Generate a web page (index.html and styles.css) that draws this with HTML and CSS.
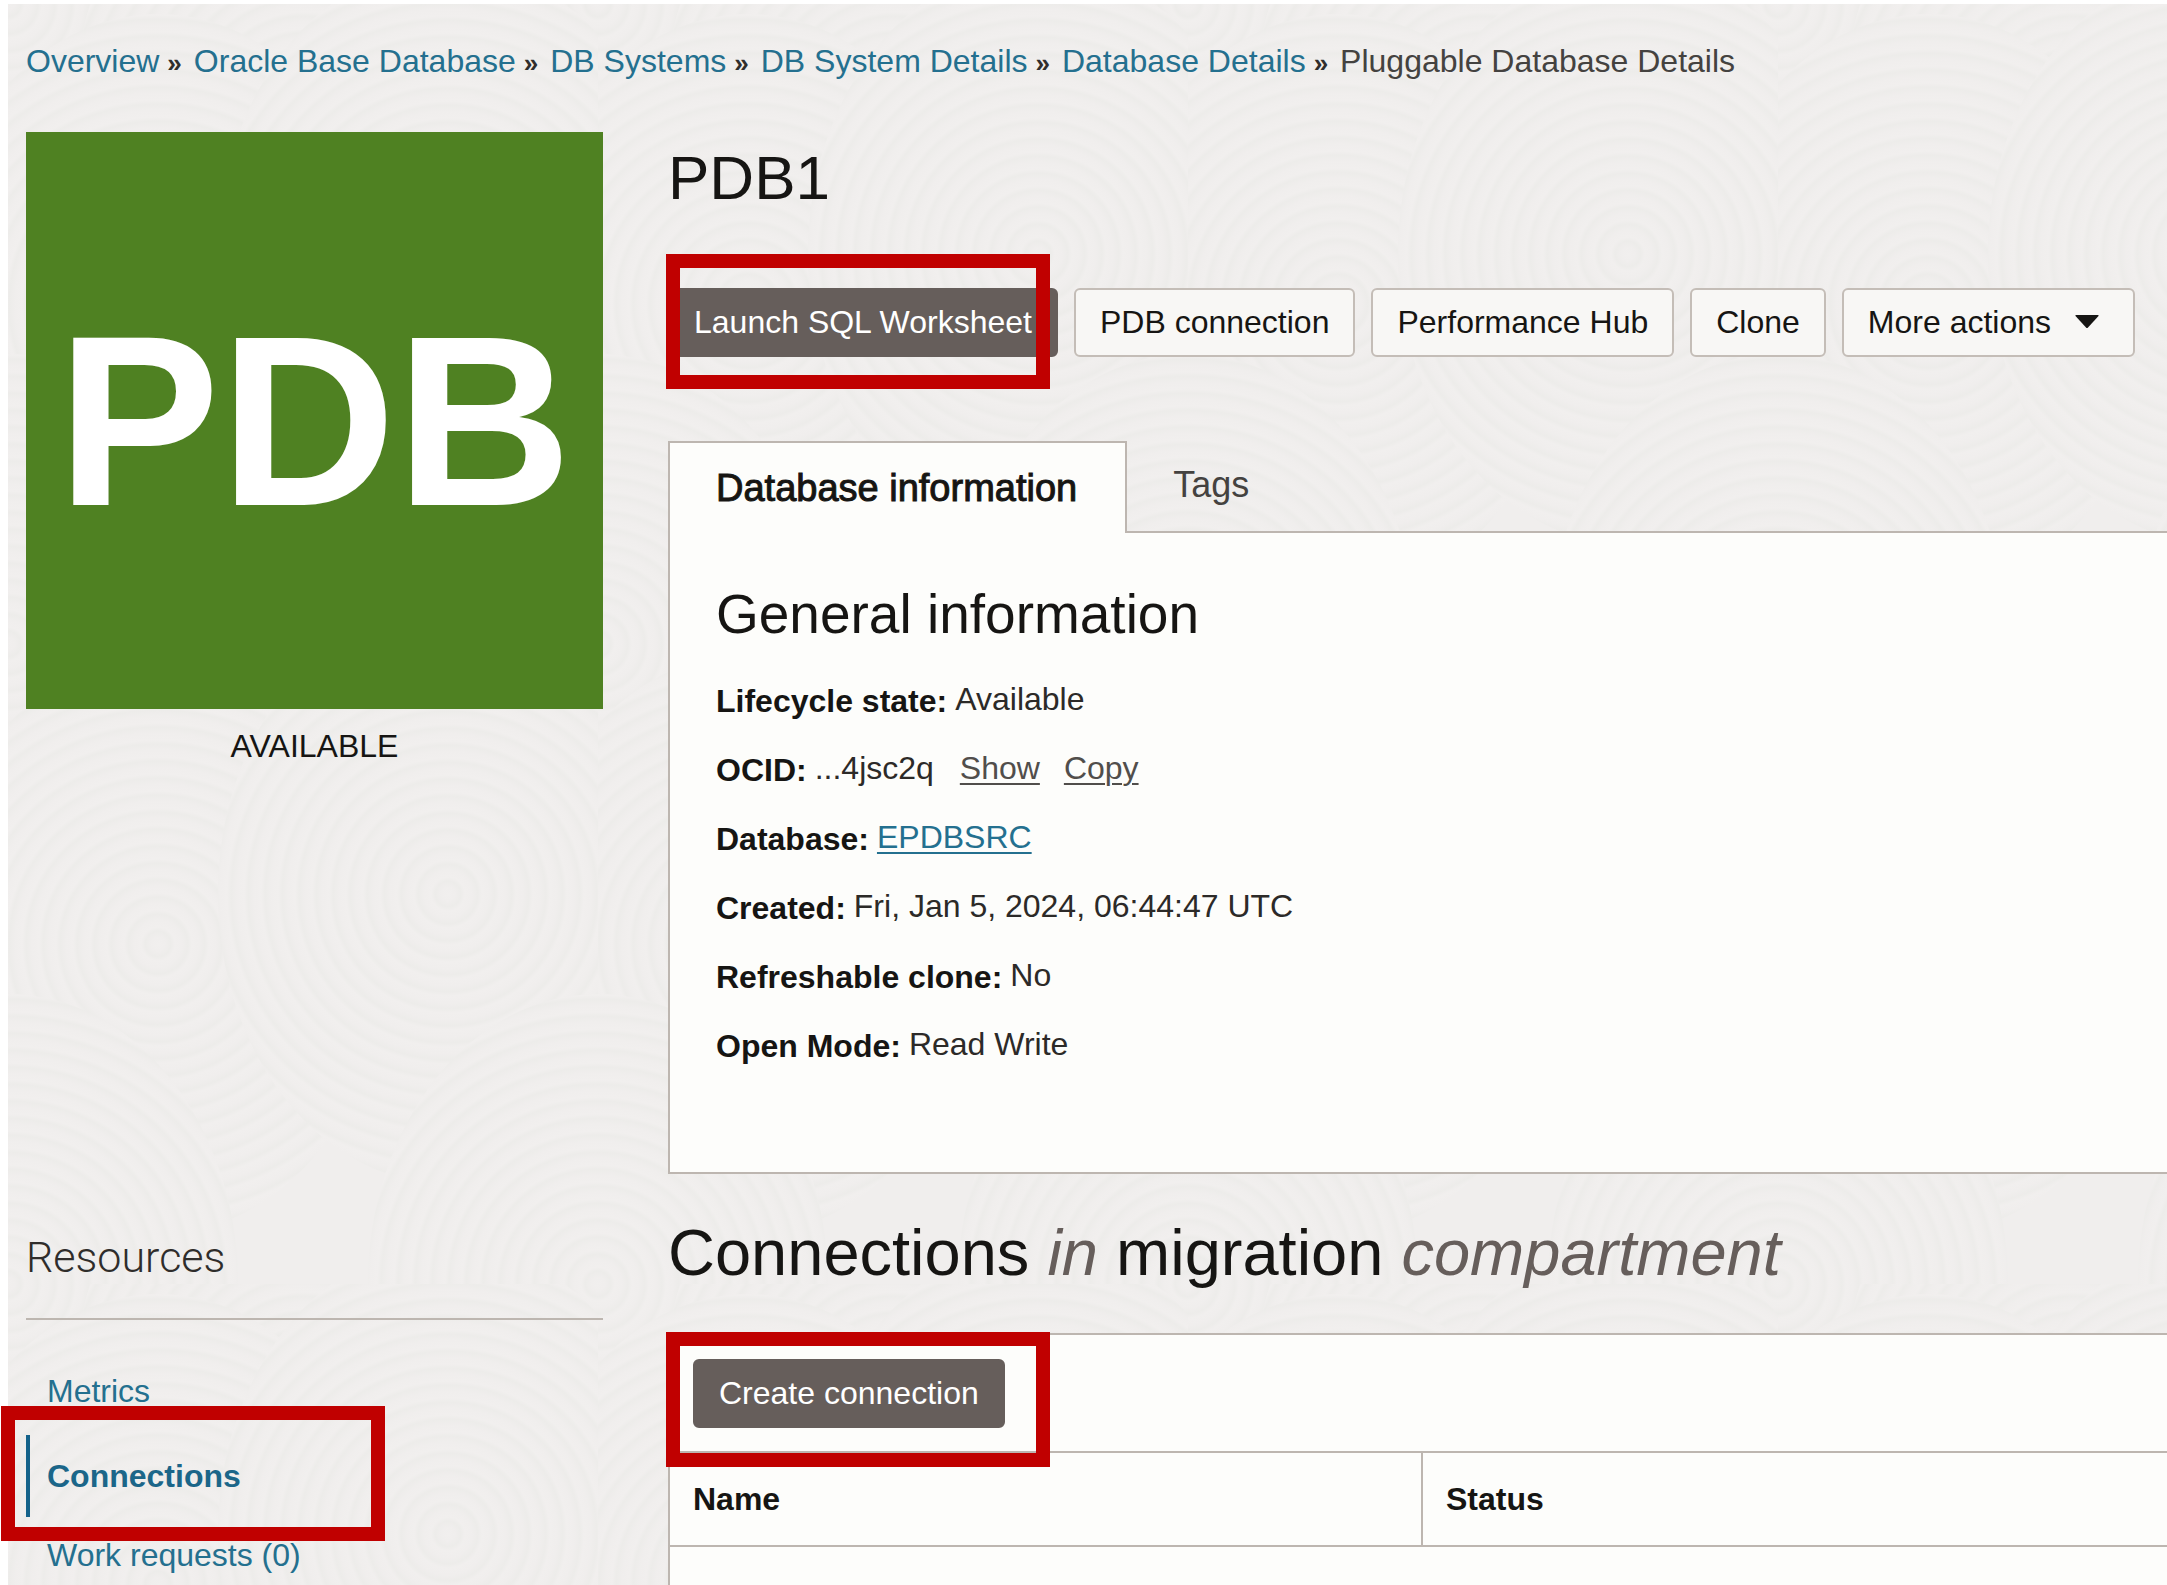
FILE: index.html
```html
<!DOCTYPE html>
<html lang="en">
<head>
<meta charset="utf-8">
<title>Pluggable Database Details</title>
<link rel="stylesheet" href="styles.css">
</head>
<body>
<div class="page">
  <svg class="texture" aria-hidden="true">
    <defs>
      <radialGradient id="rings" gradientUnits="userSpaceOnUse" cx="0" cy="0" r="17" spreadMethod="repeat">
        <stop offset="0" stop-color="#f1efee"/>
        <stop offset="0.4" stop-color="#f0eeed"/>
        <stop offset="0.75" stop-color="#edecea"/>
        <stop offset="1" stop-color="#f1efee"/>
      </radialGradient>
      <ellipse id="swirl" rx="230" ry="290" fill="url(#rings)"/>
      <pattern id="swirls" width="590" height="640" patternUnits="userSpaceOnUse">
        <use href="#swirl" x="0" y="0"/>
        <use href="#swirl" x="590" y="0"/>
        <use href="#swirl" x="295" y="110"/>
        <use href="#swirl" x="150" y="300"/>
        <use href="#swirl" x="440" y="250"/>
        <use href="#swirl" x="0" y="640"/>
        <use href="#swirl" x="590" y="640"/>
      </pattern>
    </defs>
    <rect width="100%" height="100%" fill="url(#swirls)"/>
  </svg>

  <nav aria-label="Breadcrumb">
    <ol class="breadcrumb">
      <li><a href="#">Overview</a></li>
      <li><a href="#">Oracle Base Database</a></li>
      <li><a href="#">DB Systems</a></li>
      <li><a href="#">DB System Details</a></li>
      <li><a href="#">Database Details</a></li>
      <li aria-current="page">Pluggable Database Details</li>
    </ol>
  </nav>

  <div class="columns">
    <aside>
      <div class="tile">PDB</div>
      <p class="state">AVAILABLE</p>
      <h2 class="resources-title">Resources</h2>
      <ul class="resources">
        <li><a href="#">Metrics</a></li>
        <li class="marked"><a class="current" href="#">Connections</a><span class="marker marker-nav"></span></li>
        <li><a href="#">Work requests (0)</a></li>
      </ul>
    </aside>

    <main>
      <h1>PDB1</h1>
      <div class="actions">
        <div class="marked"><button class="btn primary" type="button">Launch SQL Worksheet</button><span class="marker marker-launch"></span></div>
        <button class="btn" type="button">PDB connection</button>
        <button class="btn" type="button">Performance Hub</button>
        <button class="btn" type="button">Clone</button>
        <button class="btn menu" type="button">More actions
          <svg width="24" height="13" viewBox="0 0 24 13" aria-hidden="true"><path d="M1 0H23Q24 0 23.500 1L13 12.500Q12 13.500 11 12.500L.5 1Q0 0 1 0Z" fill="#161513"/></svg>
        </button>
      </div>

      <div class="tabs" role="tablist">
        <button class="tab active" type="button" role="tab" aria-selected="true">Database information</button>
        <button class="tab" type="button" role="tab" aria-selected="false">Tags</button>
      </div>
      <section class="panel info">
        <h2>General information</h2>
        <dl>
          <div><dt>Lifecycle state:</dt><dd>Available</dd></div>
          <div><dt>OCID:</dt><dd>...4jsc2q</dd><dd class="tools"><a href="#">Show</a><a href="#">Copy</a></dd></div>
          <div><dt>Database:</dt><dd><a class="link" href="#">EPDBSRC</a></dd></div>
          <div><dt>Created:</dt><dd>Fri, Jan 5, 2024, 06:44:47 UTC</dd></div>
          <div><dt>Refreshable clone:</dt><dd>No</dd></div>
          <div><dt>Open Mode:</dt><dd>Read Write</dd></div>
        </dl>
      </section>

      <h2 class="section-title">Connections <em>in</em> migration <em>compartment</em></h2>
      <section class="panel connections">
        <div class="toolbar">
          <div class="marked"><button class="btn primary" type="button">Create connection</button><span class="marker marker-create"></span></div>
        </div>
        <table>
          <thead><tr><th class="name" scope="col">Name</th><th scope="col">Status</th></tr></thead>
          <tbody></tbody>
        </table>
      </section>
    </main>
  </div>
</div>
</body>
</html>
```
FILE: styles.css
```css
* { box-sizing: border-box; }

html { overflow: hidden; }

body {
  margin: 0;
  background: #fff;
  color: #161513;
  font: 32px/40px "Liberation Sans", Arial, sans-serif;
}

h1, h2, p, ol, ul, dl, dd { margin: 0; padding: 0; font-weight: normal; }
ol, ul { list-style: none; }
a { color: #24708f; text-decoration: none; }

.page {
  position: relative;
  display: flex;
  flex-direction: column;
  height: calc(100vh - 4px);
  margin: 4px 0 0 8px;
  padding: 37px 0 0 18px;
  overflow: clip;
  overflow-clip-margin: 10px;
  background: #f0eeed;
}

.texture {
  position: absolute;
  inset: 0;
  width: 100%;
  height: 100%;
}

nav, .columns { position: relative; }

/* Breadcrumb */
.breadcrumb { display: flex; height: 40px; color: #444240; }
.breadcrumb li + li::before {
  content: "»";
  margin: 0 12px 0 8px;
  color: #302e2c;
  font-size: 26px;
  font-weight: bold;
}

/* Layout */
.columns {
  display: grid;
  grid-template-columns: 577px 1fr;
  gap: 65px;
  flex: 1;
  margin-top: 51px;
}
main { display: flex; flex-direction: column; min-width: 0; }

/* Sidebar */
.tile {
  display: grid;
  place-items: center;
  height: 577px;
  background: #4f8122;
  color: #fff;
  font-size: 244px;
  font-weight: bold;
  line-height: 276px;
}
.state { margin-top: 17px; text-align: center; }
.resources-title {
  margin-top: 467px;
  padding-bottom: 37px;
  border-bottom: 2px solid #bdb6b0;
  color: #2f2d2b;
  font: 300 43px/48px Roboto, "Liberation Sans", sans-serif;
}
.resources { margin-top: 33px; }
.resources a {
  display: block;
  padding: 0 0 6px 17px;
  border-left: 4px solid transparent;
  line-height: 76px;
}
.resources .current {
  padding-bottom: 0;
  border-color: #14628a;
  color: #1b6689;
  font-weight: bold;
  line-height: 82px;
}

/* Callout frames drawn over the controls */
.marked { position: relative; }
.marker {
  position: absolute;
  width: 384px;
  height: 135px;
  border: 14px solid #c00000;
  pointer-events: none;
}
.marker-nav { left: -25px; top: -29px; }
.marker-launch { left: -2px; top: -34px; }
.marker-create { left: -27px; top: -27px; }

/* Buttons */
h1, .section-title { font-size: 65px; line-height: 72px; }
h1 { margin-top: 10px; font-size: 62px; }
.actions { display: flex; gap: 16px; margin-top: 74px; }
.btn {
  display: flex;
  align-items: center;
  height: 69px;
  padding: 0 24px 2px;
  border: 2px solid #c4bdb7;
  border-radius: 6px;
  background: #f8f7f5;
  color: #161513;
  font: inherit;
  white-space: nowrap;
}
.btn.primary { border-color: #665e5b; background: #665e5b; color: #fff; }
.btn.menu { gap: 24px; padding-right: 34px; }

/* Tabs */
.tabs { display: flex; margin-top: 84px; }
.tab {
  height: 92px;
  margin: 0;
  padding: 0 46px 4px;
  border: 0;
  background: none;
  color: #444240;
  font: 36px/44px "Liberation Sans", Arial, sans-serif;
}
.tab.active {
  z-index: 1;
  padding: 0 48px 0 46px;
  border: 2px solid #bdb6b0;
  border-bottom: 0;
  background: #fdfdfb;
  color: #161513;
  font-size: 38px;
  -webkit-text-stroke: 1px #161513;
}

/* Panels */
.panel {
  border: 2px solid #bdb6b0;
  border-right: 0;
  background: #fdfdfb;
}
.info { margin-top: -2px; padding: 49px 46px 105px; }
.info h2 { margin-bottom: 34px; font-size: 55px; line-height: 64px; }
.info dl { display: grid; gap: 27px; }
.info dl div { display: flex; gap: 8px; height: 42px; }
.info dt { font-weight: bold; line-height: 42px; }
.info dd { color: #2c2a28; line-height: 38px; }
.info dd a { text-decoration: underline; text-decoration-thickness: 2px; text-underline-offset: 4px; }
.info .link { color: #24708f; }
.tools { display: flex; gap: 24px; margin-left: 18px; }
.info .tools a { color: #514e4b; }

.section-title { margin: 43px 0 44px; }
.section-title em { color: #665e5b; }

.connections { flex: 1; border-bottom: 0; }
.toolbar { display: flex; padding: 24px 23px 23px; }
table { width: 100%; border-collapse: separate; border-spacing: 0; table-layout: fixed; }
th {
  padding: 26px 23px;
  border-top: 2px solid #bdb6b0;
  border-bottom: 2px solid #bdb6b0;
  text-align: left;
}
th.name { width: 753px; border-right: 2px solid #bdb6b0; }
```
